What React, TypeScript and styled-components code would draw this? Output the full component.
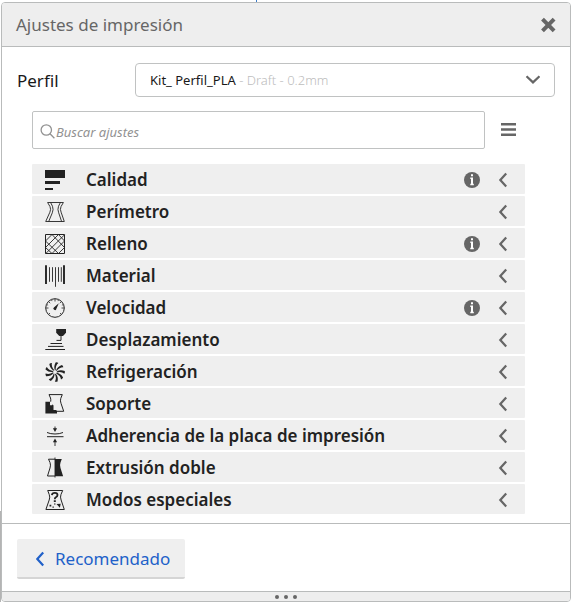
import React, { ReactNode } from "react";
import styled, { createGlobalStyle } from "styled-components";

const GlobalStyle = createGlobalStyle`
  *, *::before, *::after { box-sizing: border-box; }
  body {
    margin: 0;
    background: #ffffff;
    color: #191919;
    font-family: "Noto Sans", "Open Sans", sans-serif;
    font-size: 17px;
    line-height: 24px;
  }
  button, input, select { font: inherit; color: inherit; }
`;

const Page = styled.main`
  padding: 2px 1px 1px;
  background:
    linear-gradient(#3a7bc8, #3a7bc8) 256px 0 / 1px 2px no-repeat,
    linear-gradient(#b4b4b4, #b4b4b4) 0 100% / 1px 92px no-repeat,
    #ffffff;
`;

const Panel = styled.section`
  border: 1px solid #b9bbbb;
  border-radius: 4px;
  background: #ffffff;
  overflow: hidden;
`;

const Header = styled.header`
  display: flex;
  align-items: center;
  justify-content: space-between;
  height: 44px;
  padding: 0 14px;
  border-bottom: 1px solid #b9bbbb;
  background: #eeeeee;
`;

const Title = styled.h1`
  margin: 0;
  color: #666666;
  font-size: 17px;
  font-weight: 400;
`;

const IconButton = styled.button`
  display: flex;
  align-items: center;
  justify-content: center;
  flex: none;
  padding: 0;
  border: 0;
  background: none;
  color: #666666;
  cursor: pointer;
`;

const ProfileRow = styled.div`
  display: flex;
  align-items: center;
  padding: 16px 15px 14px;
`;

const ProfileLabel = styled.label`
  flex: none;
  width: 118px;
  padding-top: 2px;
`;

const SelectBox = styled.div`
  display: grid;
  flex: 1;
  align-items: center;
  height: 34px;
  font-size: 13px;
  & > * { grid-area: 1 / 1; }
`;

const ProfileSelect = styled.select`
  width: 100%;
  height: 100%;
  padding: 0 40px 0 14px;
  border: 1px solid #c0c2c2;
  border-radius: 4px;
  appearance: none;
  background: #ffffff;
  color: transparent;
  option { color: #191919; }
`;

const SelectValue = styled.span`
  display: flex;
  align-items: center;
  justify-content: space-between;
  padding: 0 14px 0 15px;
  color: #666666;
  pointer-events: none;
`;

const ProfileName = styled.span`
  color: #191919;
`;

const ProfileDetail = styled.span`
  color: #bdbdbd;
  font-weight: 300;
`;

const Content = styled.div`
  padding: 0 45px 9px 30px;
  border-bottom: 1px solid #b9bbbb;
`;

const SearchRow = styled.div`
  display: flex;
  align-items: center;
  gap: 16px;
  padding-right: 9px;
  margin-bottom: 15px;
`;

const SearchBox = styled.label`
  display: flex;
  flex: 1;
  align-items: center;
  gap: 1px;
  height: 38px;
  padding: 3px 7px 0;
  border: 1px solid #c0c2c2;
  border-radius: 2px;
  color: #929292;
`;

const SearchInput = styled.input`
  flex: 1;
  min-width: 0;
  height: 24px;
  padding: 0;
  border: 0;
  outline: 0;
  background: none;
  font-size: 13px;
  font-style: italic;
  &::placeholder { color: #929292; opacity: 1; }
`;

const CategoryList = styled.ul`
  display: grid;
  gap: 2px;
  margin: 0;
  padding: 0;
  list-style: none;
`;

const CategoryButton = styled.button`
  display: flex;
  align-items: center;
  width: 100%;
  height: 30px;
  padding: 2px 17px 0 12px;
  border: 0;
  border-radius: 1px;
  background: #efefef;
  color: #666666;
  text-align: left;
  cursor: pointer;
`;

const CategoryIcon = styled.svg`
  flex: none;
  width: 22px;
  height: 22px;
  margin: 2px 20px 0 0;
  color: #222222;
  overflow: visible;
`;

const CategoryName = styled.span`
  flex: 1;
  color: #222222;
  font-weight: 600;
`;

const Indicators = styled.span`
  display: flex;
  align-items: center;
  gap: 18px;
`;

const Footer = styled.footer`
  padding: 15px 15px 12px;
`;

const RecommendedButton = styled.button`
  display: flex;
  align-items: center;
  gap: 10px;
  height: 40px;
  padding: 2px 15px 0 18px;
  border: 0;
  border-bottom: 2px solid #d5d5d5;
  border-radius: 2px;
  background: #efefef;
  color: #2161c9;
  cursor: pointer;
`;

const DragHandle = styled.div`
  display: flex;
  align-items: center;
  justify-content: center;
  gap: 5px;
  height: 10px;
  border-top: 1px solid #b9bbbb;
  background: #eeeeee;
`;

const Dot = styled.span`
  width: 4px;
  height: 4px;
  border-radius: 50%;
  background: #666666;
`;

const ChevronLeft = () => (
  <svg width="10" height="16" viewBox="0 0 10 16" fill="none" stroke="currentColor" strokeWidth="2.2" aria-hidden="true">
    <path d="M8.2 1.5 2.3 8l5.9 6.5" />
  </svg>
);

const ChevronDown = () => (
  <svg width="16" height="10" viewBox="0 0 16 10" fill="none" stroke="currentColor" strokeWidth="2.2" aria-hidden="true">
    <path d="M1.5 1.2 8 7.4l6.5-6.2" />
  </svg>
);

const InfoMark = () => (
  <svg width="16" height="16" viewBox="0 0 16 16" role="img" aria-label="Info">
    <circle cx="8" cy="8" r="8" fill="currentColor" />
    <path d="M7 2.3h2v2H7zM6.3 5.6H9v6.2h.8v1.4H6.3v-1.4H7V7h-.7z" fill="#fff" />
  </svg>
);

const fanBlades = [0, 40, 80, 120, 160, 200, 240, 280, 320];

const line = { fill: "none", stroke: "currentColor", strokeWidth: 1 };

const icons: Record<string, ReactNode> = {
  quality: (
    <g fill="currentColor">
      <path d="M1 0h20v8H1zM1 11h15v3H1zM1 18h8v2H1z" />
    </g>
  ),
  shell: (
    <g {...line} strokeWidth=".9">
      <path d="M3.6.5h15.8L17 4.6q-1.2 2.8.1 5.6l3.2 9.3H1.7l4.2-9.3Q7.200 7.400 6 4.600z" />
      <path d="M6.600.5 8.500 4.300q1.200 3.200-.2 6.500L4.700 19.500M16.400.5 14.500 4.300q-1.200 3.200.2 6.500l2.900 8.700" />
    </g>
  ),
  infill: (
    <g {...line}>
      <path d="M1.500.5h19v19h-19z" />
      <path d="M8 .5 1.500 7M14.500.5l-13 13M20.500.8 1.800 19.500M20.500 7 8 19.500M20.500 13.500l-6 6M14.500.5l6 6.500M8 .5l12.500 13M1.500 7 14.500 19.500M1.500 13.500l6.500 6" strokeWidth=".9" />
    </g>
  ),
  material: (
    <g {...line}>
      <path d="M2 -.8v18.800M20 -.8v18.800" strokeWidth="1.900" />
      <path d="M5.500 1.200v14.600M8.500 1.200v14.600M11.500 1.200v19.600M14.500 1.200v14.600M17.300 1.200v14.600" strokeWidth=".9" />
    </g>
  ),
  speed: (
    <g {...line}>
      <circle cx="11" cy="10" r="9.300" />
      <path d="M11 1v2.500M2 10h2.500M17.500 10H20M4.600 3.600l1.600 1.600M17.400 3.600l-1.600 1.600M4.600 16.400l1.400-1.400M17.400 16.400 16 15M7.500 1.800l.5 1.300M14.500 1.800l-.5 1.300M2.800 6.600l1.300.5M19.200 6.600l-1.300.5" strokeWidth=".8" />
      <path d="M14.800 5.300 12.400 10.700a1.500 1.500 0 1 1-2.500-1.300z" fill="currentColor" stroke="none" />
    </g>
  ),
  travel: (
    <g {...line}>
      <path d="M12.200-1H22v3.800L19 6h-3.700l-3.100-3.200z" fill="currentColor" stroke="none" />
      <path d="M17 6v4.400h-4.500M6.500 13.500H18M4 16.400h15.500M1.300 19.500H21" />
    </g>
  ),
  cooling: (
    <g fill="currentColor">
      {fanBlades.map((angle) => (
        <path key={angle} d="M10.900 8.200Q9.200 4.400 11.800.2q1.700-.1 2.600.9-3 2.400-2.700 7.100z" transform={`rotate(${angle} 11 10)`} />
      ))}
    </g>
  ),
  support: (
    <g {...line}>
      <path d="M1.400 7.700H6v3.500h3v5.300h4v3H1.400z" fill="currentColor" stroke="none" />
      <path d="M6.700 7.700q.3-2-.2-3.700L5 .6h13.300l-1.500 3.700q-.8 2.600.2 5l2.700 8h-8M8 11.200h1v5.300h3" />
    </g>
  ),
  adhesion: (
    <g {...line}>
      <path d="M3 6.500Q6.500 8 11 8t8-1.500M3 10.700h16.500" />
      <path d="M11 .5v2.500M11 16v4" strokeWidth=".9" />
      <path d="M8.900 2.300h4.200L11 6zM8.900 16.300h4.200L11 12.600z" fill="currentColor" stroke="none" />
    </g>
  ),
  dual: (
    <g {...line}>
      <path d="M11 1.200H4.500L6 4.500q1 2.600 0 5.500l-2.500 8H11" />
      <path d="M11 .9h6.800L16.500 4.500q-1 2.600 0 5.500l2.600 8.300H11z" fill="currentColor" stroke="none" />
      <path d="M11-.5v20" strokeWidth=".9" />
    </g>
  ),
  special: (
    <g {...line}>
      <path d="M3.700.5h15L17 4.400q-1 2.600.1 5.600l3.200 9.500H1.900L5.200 10q1.100-3 0-5.600z" />
      <path d="M7.900 5.200q.2-2.300 3-2.300 2.600 0 2.600 2 0 1.400-1.600 2.300-1.100.6-1.100 2" strokeWidth="1.800" />
      <path d="M9.800 10.300h2v1.800h-2zM5.500 14.800h1.800v1.600H5.500zM8.500 16.500h1.300v1.300H8.500zM12.500 14l4.200-.2-.8 3.900zM10 13.500h1.500v1H10z" fill="currentColor" stroke="none" />
    </g>
  ),
};

const categories = [
  { name: "Calidad", icon: "quality", info: true },
  { name: "Perímetro", icon: "shell" },
  { name: "Relleno", icon: "infill", info: true },
  { name: "Material", icon: "material" },
  { name: "Velocidad", icon: "speed", info: true },
  { name: "Desplazamiento", icon: "travel" },
  { name: "Refrigeración", icon: "cooling" },
  { name: "Soporte", icon: "support" },
  { name: "Adherencia de la placa de impresión", icon: "adhesion" },
  { name: "Extrusión doble", icon: "dual" },
  { name: "Modos especiales", icon: "special" },
];

export default function App() {
  return (
    <>
      <GlobalStyle />
      <Page>
        <Panel>
          <Header>
            <Title>Ajustes de impresión</Title>
            <IconButton type="button" aria-label="Cerrar">
              <svg width="16" height="16" viewBox="0 0 16 16" fill="none" stroke="currentColor" strokeWidth="4">
                <path d="m2.500 2.200 11.600 11.600M14.100 2.200 2.500 13.800" />
              </svg>
            </IconButton>
          </Header>
          <ProfileRow>
            <ProfileLabel htmlFor="profile">Perfil</ProfileLabel>
            <SelectBox>
              <ProfileSelect id="profile" defaultValue="pla">
                <option value="pla">Kit_ Perfil_PLA - Draft - 0.2mm</option>
              </ProfileSelect>
              <SelectValue aria-hidden="true">
                <span>
                  <ProfileName>Kit_ Perfil_PLA</ProfileName>
                  <ProfileDetail> - Draft - 0.2mm</ProfileDetail>
                </span>
                <ChevronDown />
              </SelectValue>
            </SelectBox>
          </ProfileRow>
          <Content>
            <SearchRow>
              <SearchBox>
                <svg width="15" height="15" viewBox="0 0 15 15" fill="none" stroke="currentColor" strokeWidth="1.3" aria-hidden="true">
                  <circle cx="6.300" cy="6" r="5.200" />
                  <path d="m10 9.800 4.400 4.400" />
                </svg>
                <SearchInput type="text" placeholder="Buscar ajustes" aria-label="Buscar ajustes" />
              </SearchBox>
              <IconButton type="button" aria-label="Menú">
                <svg width="15" height="14" viewBox="0 0 15 14" fill="currentColor">
                  <path d="M0 0h15v2.500H0zM0 5.200h15v2.500H0zM0 10.400h15v2.500H0z" />
                </svg>
              </IconButton>
            </SearchRow>
            <CategoryList>
              {categories.map((category) => (
                <li key={category.name}>
                  <CategoryButton type="button" aria-expanded={false}>
                    <CategoryIcon viewBox="0 0 22 22" aria-hidden="true">
                      {icons[category.icon]}
                    </CategoryIcon>
                    <CategoryName>{category.name}</CategoryName>
                    <Indicators>
                      {category.info && <InfoMark />}
                      <ChevronLeft />
                    </Indicators>
                  </CategoryButton>
                </li>
              ))}
            </CategoryList>
          </Content>
          <Footer>
            <RecommendedButton type="button">
              <ChevronLeft />
              Recomendado
            </RecommendedButton>
          </Footer>
          <DragHandle>
            <Dot />
            <Dot />
            <Dot />
          </DragHandle>
        </Panel>
      </Page>
    </>
  );
}
